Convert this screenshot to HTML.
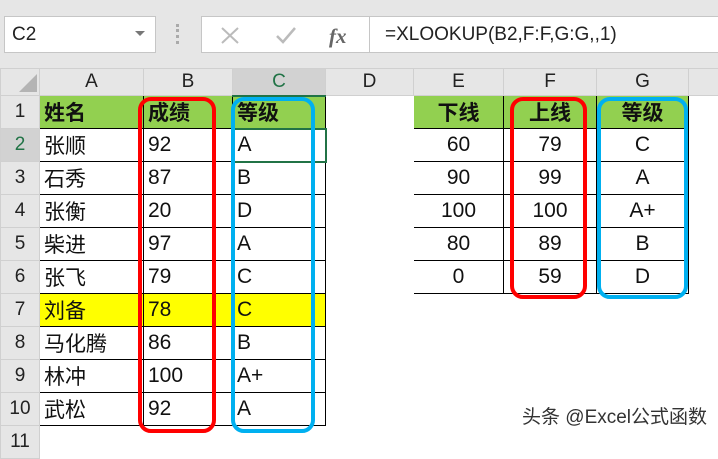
<!DOCTYPE html>
<html><head><meta charset="utf-8"><style>
*{margin:0;padding:0;box-sizing:border-box}
body{width:718px;height:438px;overflow:hidden;background:#fff;font-family:"Liberation Sans","Noto Sans CJK SC",sans-serif;position:relative}
.top{position:absolute;left:0;top:0;width:718px;height:68px;background:#e6e6e6}
.nb{position:absolute;left:4px;top:16px;width:152px;height:37px;background:#fff;border:1px solid #c6c6c6;font-size:19px;color:#222;padding:7px 0 0 7px}
.fxb{position:absolute;left:201px;top:16px;width:169px;height:37px;background:#fff;border:1px solid #c6c6c6}
.fb{position:absolute;left:369px;top:16px;width:360px;height:37px;background:#fff;border:1px solid #c6c6c6;font-size:19px;color:#222;padding:7px 0 0 15px}
table{position:absolute;left:0;top:68px;border-collapse:collapse;table-layout:fixed;width:728px}
td{border:1px solid #fff;height:33px;font-size:21px;color:#111;padding:0 0 0 4px;white-space:nowrap;overflow:hidden}
tr.h td{height:27px;background:#e6e6e6;text-align:center;padding:0;font-size:19px;color:#222;border-color:#d0d0d0}
td.rn{background:#e6e6e6;text-align:center;padding:0;font-size:19px;color:#222;border-color:#d0d0d0}
td.k{border:1px solid #000}
td.g{background:#92d050;font-weight:bold}
td.y{background:#ff0}
td.c{text-align:center;padding:0}
.sel{background:#d2d2d2!important;color:#217346!important}
.box{position:absolute;border-radius:13px;border:4px solid}
</style></head><body>
<div class="top"></div>
<div class="nb">C2<span style="position:absolute;right:10px;top:14px;border:5px solid transparent;border-top:5px solid #777"></span></div>
<div style="position:absolute;left:176px;top:24px;width:3px;height:20px;border-left:3px dotted #aaa"></div>
<div class="fxb">
<svg width="169" height="37" style="position:absolute;left:0;top:0"><path d="M20 11 L36 26 M36 11 L20 26" stroke="#bbb" stroke-width="2"/><path d="M75 19 L81 25 L93 11" stroke="#bbb" stroke-width="2.5" fill="none"/><text x="127" y="26" font-family="Liberation Serif" font-style="italic" font-weight="bold" font-size="21" fill="#666">fx</text></svg>
</div>
<div class="fb">=XLOOKUP(B2,F:F,G:G,,1)</div>
<table>
<colgroup><col style="width:39px"><col style="width:104px"><col style="width:89px"><col style="width:93px"><col style="width:88px"><col style="width:90px"><col style="width:93px"><col style="width:92px"><col style="width:40px"></colgroup>
<tr class="h"><td><svg width="30" height="22" style="display:block;margin:2px 0 0 8px"><path d="M28 2 L28 20 L10 20Z" fill="#b4b4b4"/></svg></td><td>A</td><td>B</td><td class="sel" style="border-bottom:2px solid #217346">C</td><td>D</td><td>E</td><td>F</td><td>G</td><td></td></tr>
<tr><td class="rn">1</td><td class="k g">姓名</td><td class="k g">成绩</td><td class="k g">等级</td><td></td><td class="k g c">下线</td><td class="k g c">上线</td><td class="k g c">等级</td><td></td></tr>
<tr><td class="rn sel">2</td><td class="k">张顺</td><td class="k">92</td><td class="k" style="border:2px solid #217346">A</td><td></td><td class="k c">60</td><td class="k c">79</td><td class="k c">C</td><td></td></tr>
<tr><td class="rn">3</td><td class="k">石秀</td><td class="k">87</td><td class="k">B</td><td></td><td class="k c">90</td><td class="k c">99</td><td class="k c">A</td><td></td></tr>
<tr><td class="rn">4</td><td class="k">张衡</td><td class="k">20</td><td class="k">D</td><td></td><td class="k c">100</td><td class="k c">100</td><td class="k c">A+</td><td></td></tr>
<tr><td class="rn">5</td><td class="k">柴进</td><td class="k">97</td><td class="k">A</td><td></td><td class="k c">80</td><td class="k c">89</td><td class="k c">B</td><td></td></tr>
<tr><td class="rn">6</td><td class="k">张飞</td><td class="k">79</td><td class="k">C</td><td></td><td class="k c">0</td><td class="k c">59</td><td class="k c">D</td><td></td></tr>
<tr><td class="rn">7</td><td class="k y">刘备</td><td class="k y">78</td><td class="k y">C</td><td></td><td></td><td></td><td></td><td></td></tr>
<tr><td class="rn">8</td><td class="k">马化腾</td><td class="k">86</td><td class="k">B</td><td></td><td></td><td></td><td></td><td></td></tr>
<tr><td class="rn">9</td><td class="k">林冲</td><td class="k">100</td><td class="k">A+</td><td></td><td></td><td></td><td></td><td></td></tr>
<tr><td class="rn">10</td><td class="k">武松</td><td class="k">92</td><td class="k">A</td><td></td><td></td><td></td><td></td><td></td></tr>
<tr><td class="rn">11</td><td></td><td></td><td></td><td></td><td></td><td></td><td></td><td></td></tr>
</table>
<div class="box" style="left:138px;top:97px;width:78px;height:336px;border-color:#f00"></div>
<div class="box" style="left:231px;top:97px;width:84px;height:336px;border-color:#00b0f0"></div>
<div class="box" style="left:510px;top:97px;width:77px;height:202px;border-color:#f00"></div>
<div class="box" style="left:597px;top:97px;width:91px;height:202px;border-color:#00b0f0"></div>
<div style="position:absolute;left:520px;top:402px;font-size:19px;color:#333;background:#fff;padding:0 2px">头条 @Excel公式函数</div>
</body></html>
